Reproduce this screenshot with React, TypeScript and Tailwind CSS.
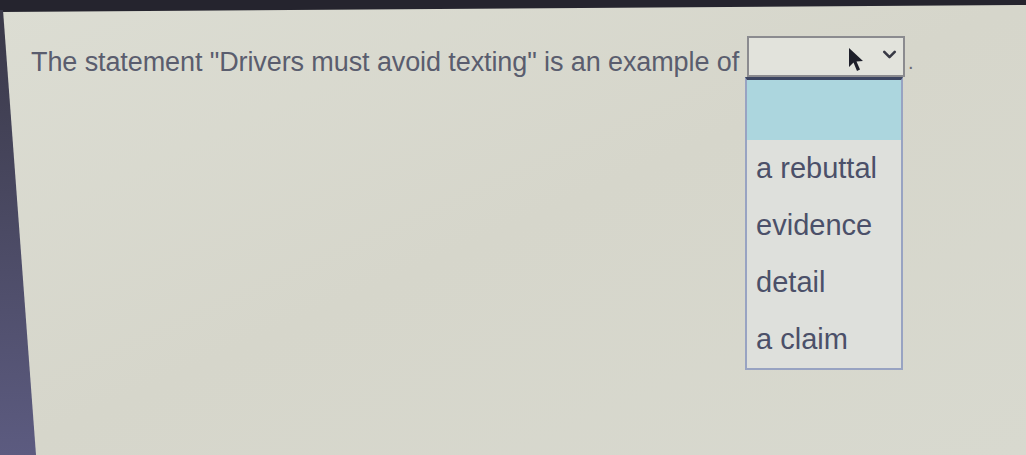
import { ChevronDown } from 'lucide-react'

const options = ['a rebuttal', 'evidence', 'detail', 'a claim']

function Pointer() {
  return (
    <svg className="h-[26px] w-[18px]" viewBox="0 0 18 26">
      <path d="M2 1 L2 20 L6.5 15.5 L10 24 L13 22.5 L9.5 14.5 L16 14 Z" fill="#1e1f2a" />
    </svg>
  )
}

function AnswerSelect() {
  return (
    <div className="relative flex h-[41px] w-[158px] items-center gap-[14px] border-2 border-[#8b8b8f] bg-[#e2e3dc] pl-[98px] pt-[6px]">
      <Pointer />
      <ChevronDown className="mb-[10px] h-[21px] w-[21px] text-[#383945]" strokeWidth={3} />

      {/* open option list */}
      <ul className="absolute left-[-4px] top-[39px] w-[158px] border-x-2 border-b-2 border-t-[3px] border-x-[#98a3c2] border-b-[#98a3c2] border-t-[#3c4561] bg-[#dee0dc]">
        <li className="h-[60px] bg-[#acd6de]" />
        {options.map((opt) => (
          <li key={opt} className="flex h-[57px] items-center pl-[9px] text-[29px] leading-none text-[#4b5069]">
            {opt}
          </li>
        ))}
      </ul>
    </div>
  )
}

export default function App() {
  return (
    <div
      className="relative h-[455px] w-[1026px] overflow-hidden bg-linear-to-br from-[#dcddd3] via-[#d6d6cb] to-[#d8d9cf]"
      style={{ fontFamily: '"Liberation Sans", Arial, sans-serif' }}
    >
      <div className="flex items-start pl-[31px] pt-[36px]">
        <p className="mt-[13px] text-[27px] leading-none tracking-[-0.1px] text-[#5a5d6e]">
          The statement &quot;Drivers must avoid texting&quot; is an example of
        </p>
        <div className="ml-[8px]">
          <AnswerSelect />
        </div>
        <span className="ml-[3px] mt-[16px] text-[20px] leading-none text-[#6b6b72]">.</span>
      </div>

      {/* monitor bezel along the top and left edge */}
      <svg className="pointer-events-none absolute inset-0 h-full w-full" viewBox="0 0 1026 455">
        <defs>
          <linearGradient id="bezel" x1="0" y1="0" x2="0" y2="1">
            <stop offset="0" stopColor="#3a3948" />
            <stop offset="1" stopColor="#5c5b80" />
          </linearGradient>
        </defs>
        <polygon points="0,0 1026,0 1026,5 0,12" fill="#25242e" />
        <polygon points="0,10 3,10 36,455 0,455" fill="url(#bezel)" />
      </svg>
    </div>
  )
}
